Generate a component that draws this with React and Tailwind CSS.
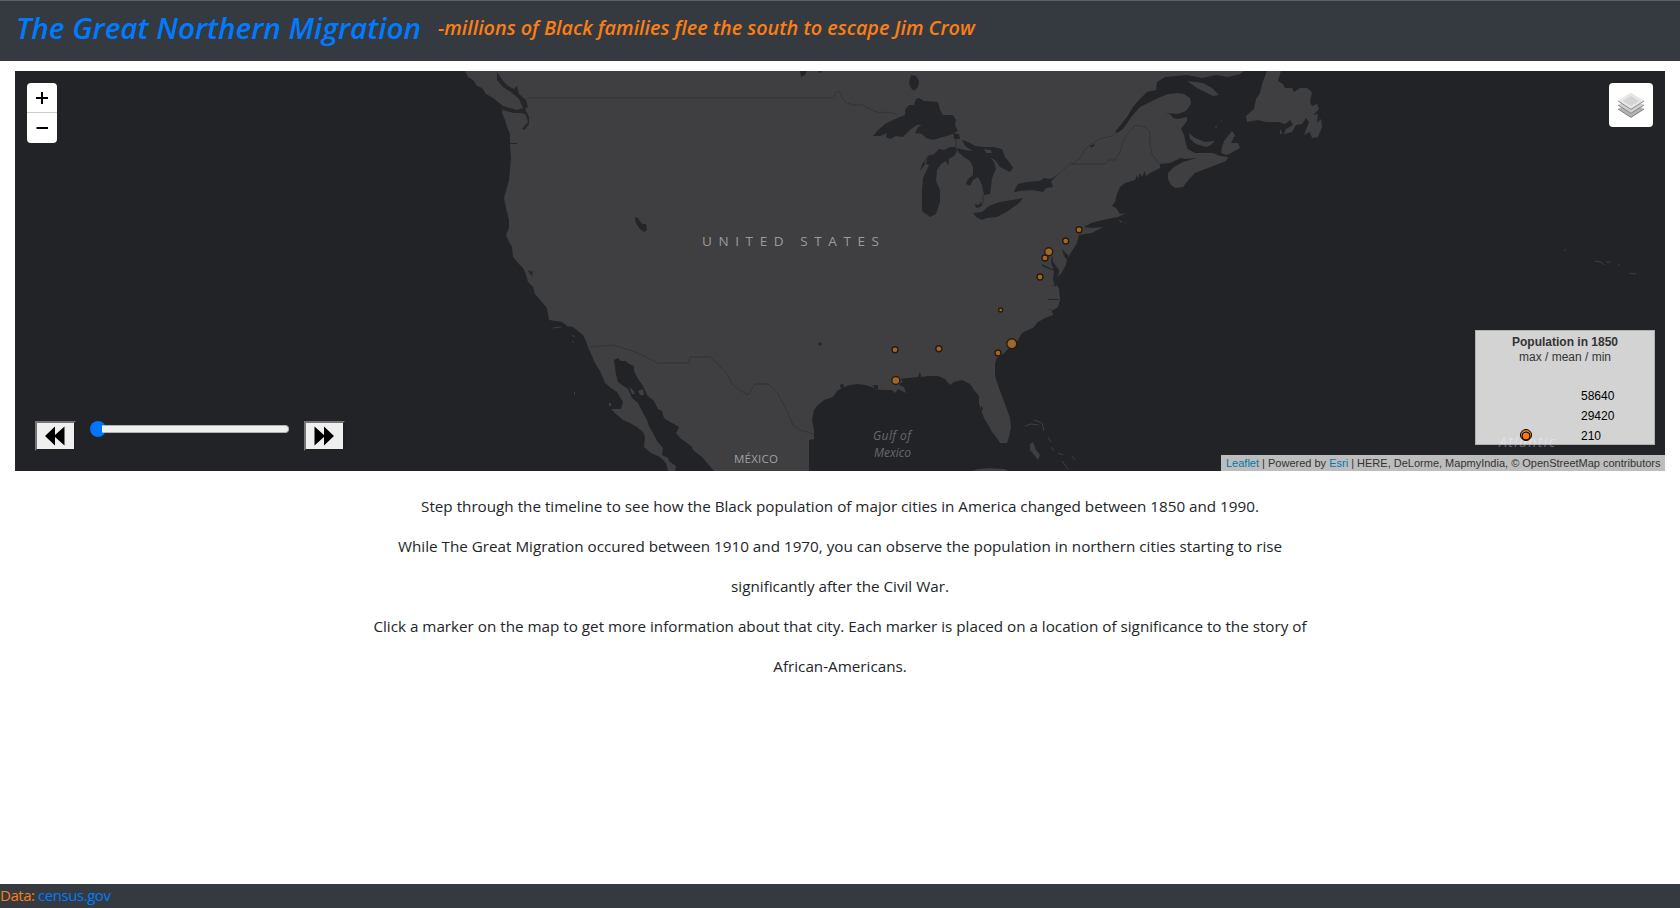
import React from "react";

const SEA = "#222327";
const LAND = "#3f3f41";

const markers = [
  [1079, 229.8, 3], [1065.7, 241, 3], [1048.7, 251.7, 4], [1045, 258, 3],
  [1040, 277, 3], [1000.7, 310, 2], [1011.8, 343.8, 5], [998, 353, 3],
  [895, 349.8, 3], [938.8, 348.8, 3], [895.8, 380.5, 4],
];

function BaseMap() {
  return (
    <svg className="absolute inset-0 h-full w-full" viewBox="15 71 1650 400" preserveAspectRatio="none">
      <rect x="15" y="71" width="1650" height="400" fill={SEA} />
      <g fill={LAND}>
        <path d="M465 71L468 77L473 80L477 86L482 88L486 94L493 98L498 102L503 106L502 113L505 120L507 127L510 134L510 145L511 158L509 180L504 198L506 208L509 220L509 228L506 235L508 240L512 247L513 257L518 263L523 268L526 275L528 282L533 287L535 294L541 301L547 308L549 320L556 321L562 322L567 326L573 327L578 331L583 335L586 341L588 347L595 363L600 371L605 383L611 388L617 392L623 402L621 409L611 409L616 414L623 420L630 423L637 427L643 432L645 437L644 447L651 453L660 457L666 463L668 471L675 471L676 466L669 461L668 458L662 455L663 448L657 441L653 433L649 426L647 420L643 413L638 403L632 398L628 389L618 382L616 374L614 360L618 358L621 361L626 361L629 364L634 366L634 371L638 379L643 386L647 395L654 401L658 409L662 411L664 418L670 422L674 424L679 427L676 433L680 438L687 443L692 447L693 450L702 457L714 471L809 471L809 440L814 439L814 430L812 420L814 410L817 406L824 400L833 397L837 391L842 388L850 385L858 384L865 385L872 387L874 389L883 390L892 390L895 393L898 389L906 393L904 387L899 385L903 381L900 379L908 378L918 377L920 372L921 377L928 376L938 376L945 379L950 385L954 382L962 380L970 384L974 390L979 396L979 404L981 410L984 418L987 423L992 432L997 438L1000 443L1007 443L1009 437L1011 427L1010 418L1005 404L999 388L995 376L995 363L997 358L1003 354L1010 347L1017 342L1022 333L1028 330L1033 328L1038 322L1045 318L1053 315L1052 311L1058 307L1060 300L1059 289L1056 283L1057 279L1062 272L1066 265L1067 259L1072 251L1077 243L1079 235L1092 233L1103 227L1092 228L1084 227L1091 223L1107 219L1112 218L1118 217L1126 213L1120 214L1116 208L1112 206L1115 202L1117 194L1120 187L1125 183L1135 180L1137 175L1138 179L1140 173L1142 177L1145 171L1146 176L1150 173L1160 168L1160 164L1170 163L1183 157L1188 150L1186 144L1184 135L1181 129L1187 121L1187 117L1178 119L1173 118L1170 114L1165 113L1178 114L1186 111L1191 104L1190 98L1184 94L1177 93L1168 94L1158 98L1140 107L1132 116L1123 129L1117 133L1115 132L1127 117L1133 107L1139 100L1147 92L1156 90L1157 82L1165 77L1187 75L1202 78L1216 75L1228 77L1240 74L1244 71Z" />
        <path d="M1186 148L1195 153L1213 153L1220 156L1228 157L1226 161L1208 168L1195 173L1190 178L1183 187L1175 188L1171 185L1168 179L1168 173L1174 167L1183 162L1197 158L1184 159L1180 157Z" />
        <path d="M1221 153L1222 147L1224 141L1232 131L1235 135L1231 143L1238 143L1240 148L1231 153L1227 155Z" />
        <path d="M1189 133L1195 138L1205 142L1215 141L1211 145L1206 147L1196 144L1190 139Z" />
        <path d="M1187 81L1203 83L1212 88L1219 95L1213 96L1197 88Z" />
        <path d="M1267 71L1281 71L1278 81L1283 84L1285 88L1292 88L1294 92L1300 88L1307 88L1312 92L1310 102L1312 106L1317 104L1319 109L1313 115L1318 114L1317 123L1321 119L1322 127L1318 137L1312 138L1310 132L1304 135L1309 122L1306 118L1302 124L1296 125L1292 132L1284 134L1286 129L1293 125L1290 120L1285 124L1279 122L1266 122L1258 120L1247 122L1246 116L1254 109L1256 99L1260 93L1262 84Z" />
        <path d="M1280 130l1 0l1 4l-2 0Z M1215 126l2 0l-1 3Z M1221 120l1 0l0 2Z" />
        <path d="M972 471L978 469L990 468L1004 469L1008 471Z" />
        <path d="M1030 444L1033 442L1036 450L1040 455L1038 460L1035 456L1030 450Z" />
        <path d="M638 391l5 -2l1 6l-4 0Z M629 387l4 3l2 4l-3 0Z M609 403l2 0l0 3l-2 0Z M620 409l4 -1l0 3Z M574 392l1 0l0 3l-1 0Z M1118 220l4 1l0 2Z M1124 222l2 0l0 1Z" />
      </g>
      <g fill="none" stroke={LAND} strokeWidth="1">
        <path d="M1025 426L1031 424L1039 425M1034 420L1042 423L1044 431M1048 437l3 5M1051 447l3 4M1058 453l5 2M1062 461l6 8M1072 456l3 4" />
        <path d="M553 328l8 -1M572 335l3 2M572 341l2 2M1564 250l2 0M1595 261l6 1l3 3M1606 262l5 0M1618 265l2 0M1629 273l7 1" />
      </g>
      <g fill="#242529">
        <path d="M873 136L878 130L885 124L895 119L905 115L905 110L909 105L914 105L916 99L919 98L924 101L938 102L940 110L943 115L953 115L956 120L955 125L958 131L950 135L943 137L933 140L926 138L922 134L915 133L918 127L922 125L917 125L911 129L903 137L896 136L890 139L886 137L887 133L880 136Z" />
        <path d="M955 147L950 147L944 150L939 149L934 154L928 156L926 163L920 171L922 164L930 153L924 163L929 165L923 178L922 190L922 200L922 211L926 214L930 217L936 214L940 202L940 190L936 181L937 170L941 164L946 161L948 166L949 159L955 155L957 150Z" />
        <path d="M957 148L965 150L973 151L965 146L962 140L968 142L975 146L984 147L993 147L1002 149L1005 157L1010 163L1013 168L1010 172L1000 167L996 161L990 157L994 162L996 169L992 178L991 187L990 194L984 195L982 185L978 177L973 180L970 186L966 184L968 179L973 175L973 167L970 161L964 157L958 152Z" />
        <path d="M984 149l7 1l1 3l-6 0Z" fill={LAND} />
        <path d="M973 213L982 212L989 206L1000 202L1012 200L1023 198L1019 203L1008 211L997 217L987 218L982 220L976 217Z" />
        <path d="M1014 191L1018 184L1027 182L1040 181L1044 178L1050 179L1058 175L1051 181L1053 187L1046 188L1043 192L1032 190L1020 191L1015 192Z" />
        <path d="M975 204l4 1l1 -3l3 3l-3 2l-4 1Z M953 133l6 1l1 5l-6 0Z" />
        <path d="M956 139v9M983 195v8" fill="none" stroke="#2f2f32" />
        <path d="M911 75l5 1l3 5l-1 6l-4 4l-3 -3l-2 -5l1 -5Z" />
        <path d="M800 71h7l-2 4l-4 2Z M818 71h5l-3 2Z M635 217l3 1l4 6l4 0l1 6l-3 2l-5 -4l-4 -7Z" />
        <path d="M497 72L503 81L508 86L514 89L517 86L519 94L526 100L528 107L525 109L529 117L529 124L524 130L522 129L528 122L526 115L522 113L514 113L503 110L503 106L517 110L523 108L519 99L511 92L503 87L497 80Z" />
        <path d="M510 143h7v1h-7Z M528 270l4 2l2 -2l-2 4l1 3l-3 -3Z" />
        <path d="M1052 254L1053 262L1059 270L1058 279L1055 287L1053 280L1054 271L1051 262Z M1062 249L1068 255L1068 261L1064 256Z M1049 285l8 0v1l-8 -1Z M1048 299h11v1h-11Z M1047 309l7 1v1Z M1042 264l12 6v1l-12 -5Z" />
        <path d="M1090 146l4 -2l1 1l-4 3Z" />
        <circle cx="820" cy="344" r="1.8" />
        <circle cx="842" cy="386" r="2" />
        <path d="M981 406l2 2l-1 3l-2 -1Z M873 385h5v4h-4Z" />
      </g>
      <g fill="none" stroke="#323235" strokeWidth="0.9">
        <path d="M527 98L834 98L836 92L839 91L842 97L845 102L853 105L863 105L872 110L880 113L886 112L897 114" />
        <path d="M1053 178L1057 175L1070 164L1105 164L1109 160L1115 160L1120 152L1123 141L1128 133L1135 125L1145 127L1150 132L1150 145L1152 154L1160 165" />
        <path d="M1072 164L1080 158L1085 149L1093 143L1102 138L1112 136L1117 132" />
        <path d="M590 347L614 345L635 352L658 363L689 363L690 357L710 357L720 366L728 375L732 384L738 389L748 395L755 384L768 384L777 392L788 413L793 425L800 430L814 434" />
      </g>
      <g fontFamily="'Open Sans', 'Noto Sans', sans-serif">
        <text x="702" y="246" fontSize="13.500" fill="#9b9b9c" textLength="177" lengthAdjust="spacing">UNITED STATES</text>
        <text x="734" y="462.500" fontSize="11.500" fill="#a0a0a1" textLength="44" lengthAdjust="spacing">MÉXICO</text>
        <g fontStyle="italic" fill="#68686b" fontSize="12">
          <text x="873" y="440" textLength="38">Gulf of</text>
          <text x="874" y="457" textLength="37">Mexico</text>
          <text x="1499" y="446.500" fontSize="14" textLength="56">Atlantic</text>
        </g>
      </g>
      {markers.map(([x, y, r]) => (
        <circle key={`${x}-${y}`} cx={x} cy={y} r={r} fill="#a0672c" stroke="#2b1a0b" strokeWidth="1.4" />
      ))}
    </svg>
  );
}

function LayersIcon() {
  return (
    <svg width="26" height="26" viewBox="0 0 26 26">
      <path d="M0 17L13 9.500L26 17L13 25.500Z" fill="#b4b4b4" />
      <path d="M0 17L13 25.300L26 17" fill="none" stroke="#7c7c7c" strokeWidth="1" />
      <path d="M0 13L13 5.500L26 13L13 21.500Z" fill="#cfcfcf" />
      <path d="M0 13L13 21.300L26 13" fill="none" stroke="#858585" strokeWidth="1" />
      <path d="M0 9L13 0.500L26 9L13 17.300Z" fill="#e6e6e6" />
      <path d="M5 9L13 4L21 9L13 14Z" fill="#d4d4d4" />
      <path d="M0 9L13 17.300L26 9" fill="none" stroke="#8c8c8c" strokeWidth="1" />
    </svg>
  );
}

function StepButton({ forward }) {
  return (
    <button
      aria-label={forward ? "Forward" : "Back"}
      className="flex h-[30px] w-[41px] items-center justify-center border-2 border-t-[#767676] border-r-[#212121] border-b-[#212121] border-l-[#767676] bg-[#efefef] pr-px"
    >
      <svg width="20" height="20" viewBox="0 0 20 20" className={forward ? "" : "-scale-x-100"}>
        <path d="M0.500 0.500L10 9V0.500L20 10L10 19.500V11L0.500 19.500Z" fill="#000" />
      </svg>
    </button>
  );
}

export default function App() {
  return (
    <div className="flex h-[908px] flex-col overflow-hidden bg-white font-['Open_Sans','Noto_Sans',sans-serif] text-[#212529]">
      <header className="flex h-[61px] shrink-0 items-center border-t border-[#5b6167] bg-[#343a40] pb-[6px] pl-4 italic whitespace-nowrap">
        <h1 className="w-[422px] shrink-0 text-[29.700px] leading-9 font-semibold text-[#007bff]">The Great Northern Migration</h1>
        <h2 className="text-[19.800px] leading-6 font-semibold text-[#fd7e14]">-millions of Black families flee the south to escape Jim Crow</h2>
      </header>

      <main className="flex min-h-0 flex-1 flex-col px-[15px] pt-[10px]">
        <section className="relative flex h-[400px] shrink-0 flex-col overflow-hidden">
          <BaseMap />
          <div className="relative flex flex-1 justify-between px-3 pt-3">
            <div className="flex flex-col">
              <div className="flex h-[60px] w-[30px] flex-col overflow-hidden rounded-sm bg-white">
                <button aria-label="Zoom in" className="flex h-[30px] items-center justify-center border-b border-[#ccc]">
                  <svg width="12" height="12"><path d="M6 0V12M0 6H12" stroke="#000" strokeWidth="2" /></svg>
                </button>
                <button aria-label="Zoom out" className="flex h-[30px] items-center justify-center">
                  <svg width="12" height="12"><path d="M0.500 6H12" stroke="#000" strokeWidth="2" /></svg>
                </button>
              </div>
              <div className="mt-[278px] ml-2 flex">
                <StepButton />
                <div className="ml-[14px] flex h-4 w-[199px] items-center rounded">
                  <div className="h-4 w-4 shrink-0 rounded-full bg-[#0075ff]" />
                  <div className="-ml-1 h-2 flex-1 rounded-r border-y border-r border-[#b2b2b2] bg-[#efefef]" />
                </div>
                <div className="ml-[15px]"><StepButton forward /></div>
              </div>
            </div>
            <button aria-label="Layers" className="flex h-11 w-11 items-center justify-center rounded-[4px] bg-white">
              <LayersIcon />
            </button>
          </div>
          <div className="relative -mt-[141px] mr-[10px] h-[115px] w-[180px] shrink-0 self-end border border-[#999]/60 bg-white/80 pt-1 text-center font-['Liberation_Sans',sans-serif] text-[12px] leading-[15px] text-[#333]">
            <div className="font-bold">Population in 1850</div>
            <div>max / mean / min</div>
            <div className="mt-[21px] pl-[105px] text-left leading-5 text-black">
              <div>58640</div>
              <div>29420</div>
              <div>210</div>
            </div>
            <svg className="absolute top-[97px] left-[43px]" width="14" height="14">
              <circle cx="7" cy="7" r="5.500" fill="#d9812e" stroke="#000" />
              <circle cx="7" cy="8" r="4" fill="#ff7800" stroke="#000" />
            </svg>
          </div>
          <div className="relative mt-[10px] h-4 w-[444px] shrink-0 self-end bg-white/70 pl-[5px] font-['Liberation_Sans',sans-serif] text-[11px] leading-4 whitespace-nowrap text-[#333]">
            <span className="text-[#0078a8]">Leaflet</span> | Powered by <span className="text-[#0078a8]">Esri</span> | HERE, DeLorme, MapmyIndia, © OpenStreetMap contributors
          </div>
        </section>

        <p className="pt-[15px] text-center text-[15.220px] leading-10 whitespace-nowrap">
          Step through the timeline to see how the Black population of major cities in America changed between 1850 and 1990.
          <br />
          While The Great Migration occured between 1910 and 1970, you can observe the population in northern cities starting to rise
          <br />
          significantly after the Civil War.
          <br />
          Click a marker on the map to get more information about that city. Each marker is placed on a location of significance to the story of
          <br />
          African-Americans.
        </p>
      </main>

      <footer className="h-6 shrink-0 bg-[#343a40] text-[15px] leading-[23px] tracking-[-0.450px] text-[#fd7e14]">
        Data: <a className="text-[#007bff]">census.gov</a>
      </footer>
    </div>
  );
}
